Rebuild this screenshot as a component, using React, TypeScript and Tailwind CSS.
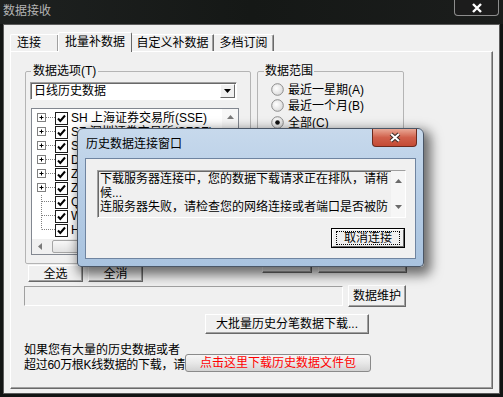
import React from "react";

const rows = [
  { plus: true, text: "SH 上海证券交易所(SSE)" },
  { plus: true, text: "SZ 深圳证券交易所(SZSE)" },
  { plus: true, text: "SO 上海个股期权" },
  { plus: true, text: "DC 大连商品期货" },
  { plus: true, text: "ZC 郑州商品期货" },
  { plus: true, text: "ZJ 中国金融期货" },
  { plus: false, text: "QH 期货主力合约" },
  { plus: false, text: "WH 外汇市场" },
  { plus: false, text: "HK 香港市场" },
];

function Btn({ className, children }: { className: string; children?: React.ReactNode }) {
  return (
    <div
      className={
        "flex shrink-0 items-center justify-center border border-t-white border-l-white border-r-[#696969] border-b-[#696969] bg-[#f0f0f0] text-[12px] leading-none text-black shadow-[inset_-1px_-1px_0_#a0a0a0] " +
        className
      }
    >
      {children}
    </div>
  );
}

function TreeGlyph({ plus, last }: { plus: boolean; last: boolean }) {
  return (
    <svg width="18" height="14" className="shrink-0">
      {plus ? (
        <>
          <rect x="0.5" y="2.5" width="8" height="8" fill="white" stroke="#808080" />
          <path d="M2.5 6.5H6.5M4.5 4.5V8.5" stroke="black" />
          <path d="M9 6.5H18" stroke="#808080" strokeDasharray="1 1" />
        </>
      ) : (
        <>
          <path d={last ? "M4.5 0V6.5" : "M4.5 0V14"} stroke="#808080" strokeDasharray="1 1" />
          <path d="M5 6.5H18" stroke="#808080" strokeDasharray="1 1" />
        </>
      )}
    </svg>
  );
}

function Check() {
  return (
    <svg width="13" height="13" className="shrink-0">
      <rect x="0.5" y="0.5" width="12" height="12" fill="white" stroke="#1c1c1c" />
      <path d="M3 6.5L5.3 9L10 3.5" stroke="black" strokeWidth="2" fill="none" />
    </svg>
  );
}

function Radio({ on, label }: { on?: boolean; label: string }) {
  return (
    <div className="flex h-[15px] items-center">
      <svg width="13" height="13" className="shrink-0">
        <defs>
          <radialGradient id="rg" cx="40%" cy="40%" r="70%">
            <stop offset="0%" stopColor="#ffffff" />
            <stop offset="100%" stopColor="#d6d6d6" />
          </radialGradient>
        </defs>
        <circle cx="6.5" cy="6.5" r="5.8" fill="url(#rg)" stroke="#8c8c8c" />
        {on && <circle cx="6.5" cy="6.5" r="2.3" fill="#111" />}
      </svg>
      <span className="ml-[4px] whitespace-nowrap leading-none">{label}</span>
    </div>
  );
}

export default function App() {
  return (
    <div className="relative h-[397px] w-[503px] overflow-hidden bg-[#121413] font-['Liberation_Sans','Noto_Sans_CJK_SC',sans-serif] text-[12px] text-black">
      {/* title bar */}
      <div className="flex h-[24px] items-start justify-between bg-gradient-to-r from-[#1e2120] via-[#151816] to-[#1b1d1c]">
        <span className="pl-[3px] pt-[4px] leading-[14px] text-[#b4b4b4]">数据接收</span>
        <div className="mr-[4px] flex h-[16px] w-[45px] items-center justify-center rounded-b-[4px] border border-t-0 border-[#8d8d8d] bg-[#1c1c1c]">
          <svg width="12" height="10">
            <path d="M2 1L10 9M10 1L2 9" stroke="white" strokeWidth="2.4" />
          </svg>
        </div>
      </div>

      {/* window body */}
      <div className="mx-[3px] h-[370px] border border-[#5c5c5c] bg-[#f0f0f0] pl-[6px] pt-[7px]">
        {/* tabs */}
        <div className="relative z-10 flex h-[19px] items-start">
          <div className="mt-[2px] flex h-[17px] w-[48px] items-center rounded-tl-[2px] border-l border-t border-white pl-[6px] shadow-[inset_-1px_0_0_#a0a0a0]">
            连接
          </div>
          <div className="flex h-[20px] w-[74px] items-center justify-center rounded-t-[2px] border-l border-r border-t border-l-white border-t-white border-r-[#696969] bg-[#f0f0f0] pb-[2px]">
            批量补数据
          </div>
          <div className="mt-[2px] flex h-[17px] w-[82px] items-center justify-center border-r border-t border-t-white border-r-[#696969] shadow-[inset_-1px_0_0_#a0a0a0]">
            自定义补数据
          </div>
          <div className="mt-[2px] flex h-[17px] w-[60px] items-center justify-center rounded-tr-[2px] border-r border-t border-t-white border-r-[#696969] shadow-[inset_-1px_0_0_#a0a0a0]">
            多档订阅
          </div>
        </div>

        {/* tab panel */}
        <div className="h-[338px] w-[483px] border border-t-white border-l-white border-r-[#696969] border-b-[#696969] shadow-[inset_-1px_-1px_0_#a0a0a0]">
          <div className="ml-[14px] mt-[12px] flex">
            {/* left column */}
            <div className="w-[226px]">
              <fieldset className="h-[200px] w-[226px] rounded-[2px] border border-[#b4b4b4]">
                <legend className="ml-[5px] px-[2px] leading-[14px]">数据选项(T)</legend>
                <div className="ml-[4px] mt-[4px] flex h-[18px] w-[207px] items-center border border-t-[#a0a0a0] border-l-[#a0a0a0] border-r-white border-b-white bg-white shadow-[inset_1px_1px_0_#696969]">
                  <span className="ml-[3px] flex-1 leading-none">日线历史数据</span>
                  <div className="mr-[1px] flex h-[14px] w-[15px] items-center justify-center border border-t-white border-l-white border-r-[#696969] border-b-[#696969] bg-[#f0f0f0]">
                    <svg width="7" height="4">
                      <path d="M0 0H7L3.5 4Z" fill="black" />
                    </svg>
                  </div>
                </div>
                {/* tree */}
                <div className="ml-[5px] mt-[8px] flex h-[147px] w-[208px] flex-col border border-[#828790] bg-white">
                  <div className="flex flex-1 overflow-hidden">
                    <div className="flex-1 overflow-hidden pl-[5px] pt-[2px]">
                      {rows.map((r, i) => (
                        <div key={i} className="flex h-[14px] items-center">
                          <TreeGlyph plus={r.plus} last={i === rows.length - 1} />
                          <Check />
                          <span className="ml-[3px] whitespace-nowrap leading-none">{r.text}</span>
                        </div>
                      ))}
                    </div>
                    <div className="flex w-[16px] flex-col items-center bg-[#f7f7f7] pt-[6px]">
                      <svg width="7" height="4">
                        <path d="M3.5 0L7 4H0Z" fill="#7a7a7a" />
                      </svg>
                    </div>
                  </div>
                  <div className="flex h-[15px] items-center bg-[#f0f0f0]">
                    <svg width="16" height="15" className="shrink-0">
                      <path d="M6 7.5L10 4V11Z" fill="#7a7a7a" />
                    </svg>
                    <div className="ml-[4px] h-[13px] w-[120px] rounded-[2px] border border-[#a5a5a5] bg-gradient-to-b from-[#f8f8f8] to-[#e2e2e2]" />
                  </div>
                </div>
              </fieldset>
              <div className="ml-[3px] mt-[1px] flex gap-[5px]">
                <Btn className="h-[17px] w-[55px]">全选</Btn>
                <Btn className="h-[17px] w-[55px]">全消</Btn>
              </div>
            </div>

            {/* right column */}
            <div className="ml-[6px] w-[150px]">
              <fieldset className="h-[186px] w-[147px] rounded-[2px] border border-[#b4b4b4]">
                <legend className="ml-[6px] px-[1px] leading-[14px]">数据范围</legend>
                <div className="ml-[13px] mt-[4px] flex flex-col gap-[1px]">
                  <Radio label="最近一星期(A)" />
                  <Radio label="最近一个月(B)" />
                  <div className="mt-[1px]">
                    <Radio on label="全部(C)" />
                  </div>
                </div>
              </fieldset>
              {/* these two buttons sit under the modal, only their lower edge shows */}
              <div className="ml-[5px] mt-[4px] flex gap-[6px]">
                <Btn className="h-[19px] w-[50px]" />
                <Btn className="h-[19px] w-[89px]" />
              </div>
            </div>
          </div>

          <div className="ml-[13px] mt-[3px] flex items-center">
            <div className="h-[20px] w-[319px] border border-t-[#a0a0a0] border-l-[#a0a0a0] border-r-white border-b-white" />
            <Btn className="ml-[5px] h-[22px] w-[58px]">数据维护</Btn>
          </div>

          <Btn className="ml-[194px] mt-[7px] h-[20px] w-[164px]">大批量历史分笔数据下载...</Btn>

          <div className="ml-[13px] mt-[9px] flex items-end">
            <div className="w-[161px] shrink-0 whitespace-nowrap leading-[15px]">
              如果您有大量的历史数据或者
              <br />
              <span className="tracking-[-0.3px]">超过60万根K线数据的下载，请</span>
            </div>
            <div className="mb-[1px] flex h-[18px] w-[186px] shrink-0 items-center justify-center rounded-[3px] border border-[#8a8a8a] bg-gradient-to-b from-[#f6f6f6] via-[#e8e8e8] to-[#d2d2d2] leading-none text-[#ff0000]">
              点击这里下载历史数据文件包
            </div>
          </div>
        </div>
      </div>

      {/* modal dialog */}
      <div className="absolute left-[77px] top-[128px] flex h-[139px] w-[347px] flex-col rounded-t-[6px] rounded-b-[4px] border border-[#4a5666] bg-gradient-to-b from-[#c7d9ec] via-[#b5cce5] to-[#a9c3df] shadow-[4px_5px_12px_3px_rgba(0,0,0,0.55)]">
        <div className="flex h-[29px] items-start justify-between">
          <span className="pl-[8px] pt-[8px] leading-[14px] text-black">历史数据连接窗口</span>
          <div className="mr-[6px] flex h-[18px] w-[45px] items-center justify-center rounded-b-[4px] border border-t-0 border-[#6b2a1e] bg-gradient-to-b from-[#e8a896] via-[#d0604b] to-[#c44a34]">
            <svg width="14" height="11">
              <path d="M3 2L11 9M11 2L3 9" stroke="#3a2a26" strokeWidth="4" />
              <path d="M3 2L11 9M11 2L3 9" stroke="white" strokeWidth="2" />
            </svg>
          </div>
        </div>
        <div className="mx-[7px] flex h-[101px] flex-col border border-[#6f84a0] bg-[#f0f0f0]">
          <div className="ml-[11px] mt-[11px] flex h-[48px] w-[309px] border border-t-[#a0a0a0] border-l-[#a0a0a0] border-r-white border-b-white shadow-[inset_1px_1px_0_#696969]">
            <div className="flex-1 overflow-hidden whitespace-nowrap pl-[2px] pt-[1px] leading-[14px]">
              下载服务器连接中，您的数据下载请求正在排队，请稍
              <br />
              候...
              <br />
              连服务器失败，请检查您的网络连接或者端口是否被防
            </div>
            <div className="flex w-[14px] flex-col items-center justify-between bg-[#f6f6f6] py-[8px]">
              <svg width="7" height="4">
                <path d="M3.5 0L7 4H0Z" fill="#6a6a6a" />
              </svg>
              <svg width="7" height="4">
                <path d="M0 0H7L3.5 4Z" fill="#6a6a6a" />
              </svg>
            </div>
          </div>
          <div className="ml-auto mr-[10px] mt-[10px] h-[20px] w-[74px] border border-black">
            <div className="flex h-full w-full items-center justify-center border border-t-white border-l-white border-r-[#696969] border-b-[#696969] bg-[#f0f0f0]">
              <div className="flex h-[14px] w-[64px] items-center justify-center border border-dotted border-black leading-none">
                取消连接
              </div>
            </div>
          </div>
        </div>
      </div>
    </div>
  );
}
